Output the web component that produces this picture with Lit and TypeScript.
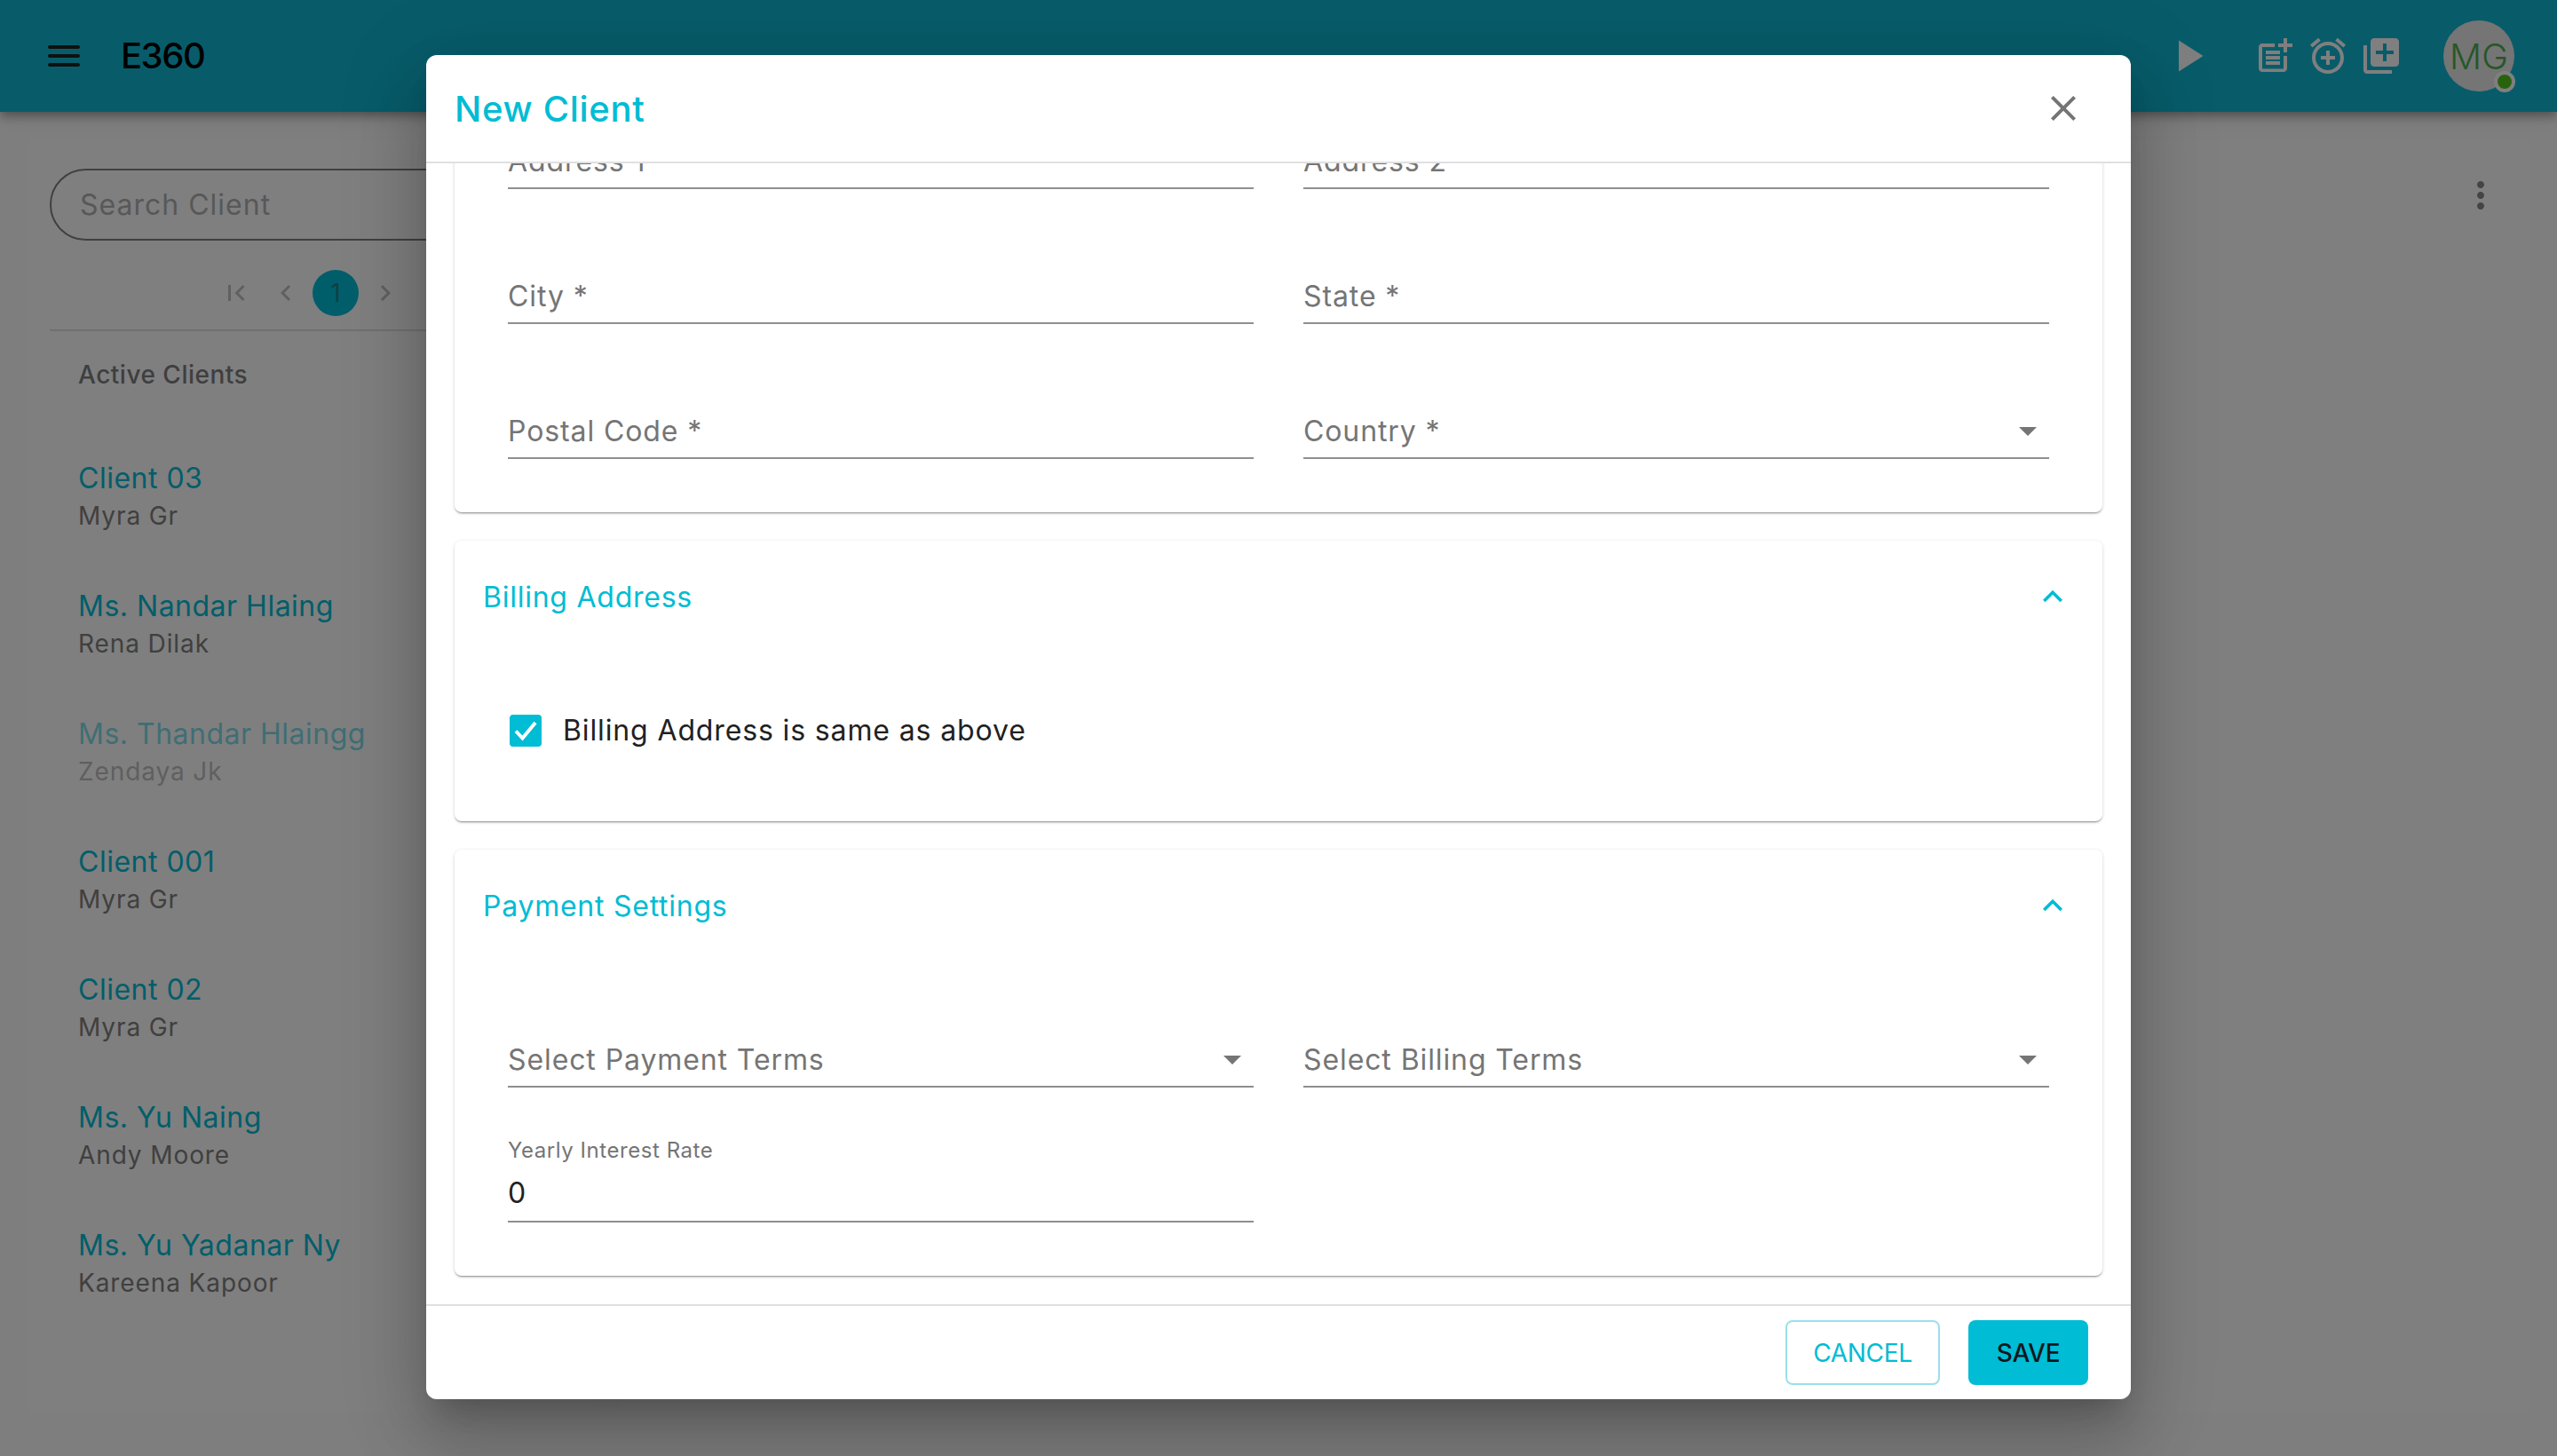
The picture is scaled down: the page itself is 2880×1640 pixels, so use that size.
import { LitElement, html, css, svg } from "lit";
import { customElement } from "lit/decorators.js";

// material icon helper, size comes from the class on the svg
const icon = (cls: string, d: string) =>
  html`<svg class=${cls} viewBox="0 0 24 24" fill="currentColor">${svg`<path d=${d}></path>`}</svg>`;

const ICONS = {
  menu: "M4 6h16a1 1 0 0 1 0 2H4a1 1 0 0 1 0-2zm0 5h16a1 1 0 0 1 0 2H4a1 1 0 0 1 0-2zm0 5h16a1 1 0 0 1 0 2H4a1 1 0 0 1 0-2z",
  play: "M8 5v14l11-7z",
  postAdd:
    "M17 19.22H5V7h7V5H5c-1.1 0-2 .9-2 2v12c0 1.1.9 2 2 2h12c1.1 0 2-.9 2-2v-7h-2v7.22zM19 2h-2v3h-3c.01.01 0 2 0 2h3v2.99c.01.01 2 0 2 0V7h3V5h-3V2zM7 9h8v2H7zM7 12v2h8v-2h-3zM7 15h8v2H7z",
  alarmAdd:
    "M7.88 3.39L6.6 1.86 2 5.71l1.29 1.53 4.59-3.85zM22 5.72l-4.6-3.86-1.29 1.53 4.6 3.86L22 5.72zM12 4c-4.97 0-9 4.03-9 9s4.02 9 9 9c4.97 0 9-4.03 9-9s-4.03-9-9-9zm0 16c-3.87 0-7-3.13-7-7s3.13-7 7-7 7 3.13 7 7-3.13 7-7 7zm1-11h-2v3H8v2h3v3h2v-3h3v-2h-3V9z",
  libraryAdd:
    "M4 6H2v14c0 1.1.9 2 2 2h14v-2H4V6zm16-4H8c-1.1 0-2 .9-2 2v12c0 1.1.9 2 2 2h12c1.1 0 2-.9 2-2V4c0-1.1-.9-2-2-2zm-1 9h-4v4h-2v-4H9V9h4V5h2v4h4v2z",
  first: "M18.41 16.59L13.82 12l4.59-4.59L17 6l-6 6 6 6zM6 6h2v12H6z",
  prev: "M15.41 7.41L14 6l-6 6 6 6 1.41-1.41L10.83 12z",
  next: "M10 6L8.59 7.41 13.17 12l-4.58 4.59L10 18l6-6z",
  more: "M12 8c1.1 0 2-.9 2-2s-.9-2-2-2-2 .9-2 2 .9 2 2 2zm0 2c-1.1 0-2 .9-2 2s.9 2 2 2 2-.9 2-2-.9-2-2-2zm0 6c-1.1 0-2 .9-2 2s.9 2 2 2 2-.9 2-2-.9-2-2-2z",
  close:
    "M19 6.41L17.59 5 12 10.59 6.41 5 5 6.41 10.59 12 5 17.59 6.41 19 12 13.41 17.59 19 19 17.59 13.41 12z",
  expandLess: "M12 8l-6 6 1.41 1.41L12 10.83l4.59 4.58L18 14z",
};

const CLIENTS = [
  { name: "Client 03", owner: "Myra Gr" },
  { name: "Ms. Nandar Hlaing", owner: "Rena Dilak" },
  { name: "Ms. Thandar Hlaingg", owner: "Zendaya Jk", inactive: true },
  { name: "Client 001", owner: "Myra Gr" },
  { name: "Client 02", owner: "Myra Gr" },
  { name: "Ms. Yu Naing", owner: "Andy Moore" },
  { name: "Ms. Yu Yadanar Ny", owner: "Kareena Kapoor" },
];

@customElement("app-root")
export class AppRoot extends LitElement {
  static styles = css`
    :host {
      display: block;
      position: relative;
      height: 100vh;
      overflow: hidden;
      background: #fcfcfc;
      font-family: Inter, "Liberation Sans", sans-serif;
      color: #212121;
    }
    svg {
      display: block;
      flex: none;
    }

    .topbar {
      height: 126px;
      display: flex;
      align-items: center;
      padding: 0 48px;
      background: #11b8d4;
      box-shadow: 0 4px 8px -2px rgba(0, 0, 0, 0.2), 0 8px 10px rgba(0, 0, 0, 0.14),
        0 2px 20px rgba(0, 0, 0, 0.12);
      position: relative;
    }
    .i48 {
      width: 48px;
      height: 48px;
    }
    .i60 {
      width: 60px;
      height: 60px;
    }
    .i36 {
      width: 36px;
      height: 36px;
    }
    .i44 {
      width: 44px;
      height: 44px;
    }
    .brand {
      margin: -2px 0 0 40px;
      font-size: 40px;
      font-weight: 500;
      letter-spacing: -1.5px;
      color: #000;
    }
    .actions {
      margin-left: auto;
      display: flex;
      align-items: center;
      gap: 12px;
      color: #fff;
    }
    .actions .i60 {
      margin-right: 32px;
    }
    .avatar {
      position: relative;
      width: 80px;
      height: 80px;
      margin-left: 34px;
      border-radius: 50%;
      background: #eaeaea;
      color: #4caf50;
      font-size: 40px;
      font-weight: 300;
      display: flex;
      align-items: center;
      justify-content: center;
    }
    .status {
      position: absolute;
      right: -1px;
      bottom: -1px;
      width: 16px;
      height: 16px;
      border: 4px solid #fff;
      border-radius: 50%;
      background: #52c41a;
    }

    .main {
      display: flex;
      height: 1434px;
      padding: 32px 32px 48px;
    }
    .clients {
      width: 636px;
      flex: none;
      padding: 32px 24px 0;
      box-sizing: border-box;
      background: #fff;
    }
    .search {
      height: 81px;
      box-sizing: border-box;
      border: 2px solid #808080;
      border-radius: 41px;
      padding-left: 32px;
      display: flex;
      align-items: center;
      font-size: 32px;
      letter-spacing: 1px;
      color: #b0b0b0;
    }
    .pager {
      height: 102px;
      box-sizing: border-box;
      border-bottom: 2px solid #e0e0e0;
      display: flex;
      align-items: center;
      justify-content: center;
      gap: 4px;
      color: #c0c0c0;
      padding-top: 18px;
    }
    .pager span {
      width: 52px;
      height: 52px;
      display: flex;
      align-items: center;
      justify-content: center;
    }
    .pager .current {
      border-radius: 50%;
      background: #00bcd4;
      color: #207e8e;
      font-size: 28px;
    }
    .list-title {
      margin: 32px 0 0 32px;
      line-height: 34px;
      font-size: 28px;
      font-weight: 500;
      letter-spacing: 0.5px;
      color: #7f7f7f;
    }
    .client {
      margin: 0 0 0 32px;
      height: 144px;
    }
    .list-title + .client {
      margin-top: 78px;
    }
    .client .name {
      line-height: 44px;
      font-size: 32px;
      letter-spacing: 0.5px;
      color: #00bcd4;
    }
    .client .owner {
      margin-top: -2px;
      line-height: 44px;
      font-size: 28px;
      letter-spacing: 0.9px;
      color: #808080;
    }
    .client.inactive {
      opacity: 0.5;
    }
    .detail {
      flex: 1;
      margin-left: 32px;
      padding: 38px 30px 0 0;
      background: #fff;
      display: flex;
      justify-content: flex-end;
      color: #888;
    }

    .overlay {
      position: absolute;
      inset: 0;
      padding-bottom: 2px;
      box-sizing: border-box;
      background: rgba(0, 0, 0, 0.5);
      display: flex;
      align-items: center;
      justify-content: center;
    }
    .dialog {
      width: 1920px;
      height: 1514px;
      background: #fff;
      border-radius: 12px;
      display: flex;
      flex-direction: column;
      overflow: hidden;
      box-shadow: 0 22px 30px -14px rgba(0, 0, 0, 0.2), 0 48px 76px 6px rgba(0, 0, 0, 0.14),
        0 18px 92px 16px rgba(0, 0, 0, 0.12);
    }
    .dialog-head {
      flex: none;
      height: 120px;
      padding: 0 52px 0 32px;
      border-bottom: 2px solid #e0e0e0;
      display: flex;
      align-items: center;
      justify-content: space-between;
      font-size: 40px;
      font-weight: 500;
      letter-spacing: 0.7px;
      color: #00bcd4;
    }
    .dialog-head svg {
      color: #757575;
    }
    .dialog-body {
      flex: 1;
      min-height: 0;
      overflow: hidden;
      padding: 0 32px 32px;
      display: flex;
      flex-direction: column;
      justify-content: flex-end;
      gap: 32px;
    }
    .card {
      flex: none;
      border-radius: 8px;
      background: #fff;
      box-shadow: 0 2px 2px -1px rgba(0, 0, 0, 0.4), 0 1px 4px rgba(0, 0, 0, 0.14);
    }
    .card-head {
      height: 126px;
      padding: 0 34px 0 32px;
      display: flex;
      align-items: center;
      justify-content: space-between;
      font-size: 32px;
      letter-spacing: 0.75px;
      color: #00bcd4;
    }
    .fields {
      display: grid;
      grid-template-columns: 840px 840px;
      column-gap: 56px;
      row-gap: 88px;
      padding: 0 60px 60px;
    }
    .fields.under-head {
      padding-top: 78px;
    }
    .field {
      position: relative;
      height: 64px;
      box-sizing: border-box;
      border-bottom: 2px solid #8f8f8f;
      padding: 2px 14px 0 0;
      display: flex;
      align-items: center;
      justify-content: space-between;
      font-size: 32px;
      letter-spacing: 0.9px;
      color: #757575;
    }
    .field .value {
      margin-top: -3px;
      color: #212121;
    }
    .field label {
      position: absolute;
      left: 0;
      top: -34px;
      line-height: 34px;
      font-size: 24px;
      letter-spacing: 0.55px;
    }
    .caret {
      margin-top: 2px;
      width: 0;
      height: 0;
      border-left: 10px solid transparent;
      border-right: 10px solid transparent;
      border-top: 10px solid #757575;
    }
    .check-row {
      padding: 70px 0 84px 62px;
      display: flex;
      align-items: center;
      gap: 24px;
      font-size: 32px;
      letter-spacing: 0.87px;
      line-height: 36px;
    }
    .dialog-foot {
      flex: none;
      height: 73px;
      padding: 16px 48px 16px 0;
      border-top: 2px solid #e0e0e0;
      display: flex;
      justify-content: flex-end;
      gap: 32px;
    }
    .btn {
      box-sizing: border-box;
      height: 73px;
      border-radius: 8px;
      display: flex;
      align-items: center;
      justify-content: center;
      font-size: 28px;
    }
    .btn.cancel {
      width: 174px;
      border: 2px solid #9be0ec;
      letter-spacing: -0.3px;
      color: #00bcd4;
    }
    .btn.save {
      width: 135px;
      background: #00bcd4;
      font-weight: 500;
      letter-spacing: -0.25px;
      color: #10181c;
    }
  `;

  private field(text: string, select = false) {
    return html`<div class="field"><span>${text}</span>${select ? html`<i class="caret"></i>` : ""}</div>`;
  }

  private cardHead(title: string) {
    return html`<div class="card-head"><span>${title}</span>${icon("i44", ICONS.expandLess)}</div>`;
  }

  render() {
    return html`
      <header class="topbar">
        ${icon("i48", ICONS.menu)}
        <div class="brand">E360</div>
        <div class="actions">
          ${icon("i60", ICONS.play)} ${icon("i48", ICONS.postAdd)} ${icon("i48", ICONS.alarmAdd)}
          ${icon("i48", ICONS.libraryAdd)}
          <div class="avatar">MG<i class="status"></i></div>
        </div>
      </header>

      <div class="main">
        <section class="clients">
          <div class="search">Search Client</div>
          <div class="pager">
            <span>${icon("i36", ICONS.first)}</span>
            <span>${icon("i36", ICONS.prev)}</span>
            <span class="current">1</span>
            <span>${icon("i36", ICONS.next)}</span>
          </div>
          <div class="list-title">Active Clients</div>
          ${CLIENTS.map(
            (c) => html`<div class="client ${c.inactive ? "inactive" : ""}">
              <div class="name">${c.name}</div>
              <div class="owner">${c.owner}</div>
            </div>`
          )}
        </section>
        <section class="detail">${icon("i48", ICONS.more)}</section>
      </div>

      <div class="overlay">
        <div class="dialog">
          <div class="dialog-head">
            <span>New Client</span>
            ${icon("i48", ICONS.close)}
          </div>
          <div class="dialog-body">
            <div class="card">
              <div class="fields">
                ${this.field("Address 1")} ${this.field("Address 2")} ${this.field("City *")}
                ${this.field("State *")} ${this.field("Postal Code *")} ${this.field("Country *", true)}
              </div>
            </div>
            <div class="card">
              ${this.cardHead("Billing Address")}
              <div class="check-row">
                <svg class="i36" viewBox="0 0 36 36">
                  <rect width="36" height="36" rx="4" fill="#00bcd4"></rect>
                  <path d="M7 18.5l7.5 8L29 9" fill="none" stroke="#fff" stroke-width="4"></path>
                </svg>
                <span>Billing Address is same as above</span>
              </div>
            </div>
            <div class="card">
              ${this.cardHead("Payment Settings")}
              <div class="fields under-head">
                ${this.field("Select Payment Terms", true)} ${this.field("Select Billing Terms", true)}
                <div class="field"><label>Yearly Interest Rate</label><span class="value">0</span></div>
              </div>
            </div>
          </div>
          <div class="dialog-foot">
            <div class="btn cancel">CANCEL</div>
            <div class="btn save">SAVE</div>
          </div>
        </div>
      </div>
    `;
  }
}
